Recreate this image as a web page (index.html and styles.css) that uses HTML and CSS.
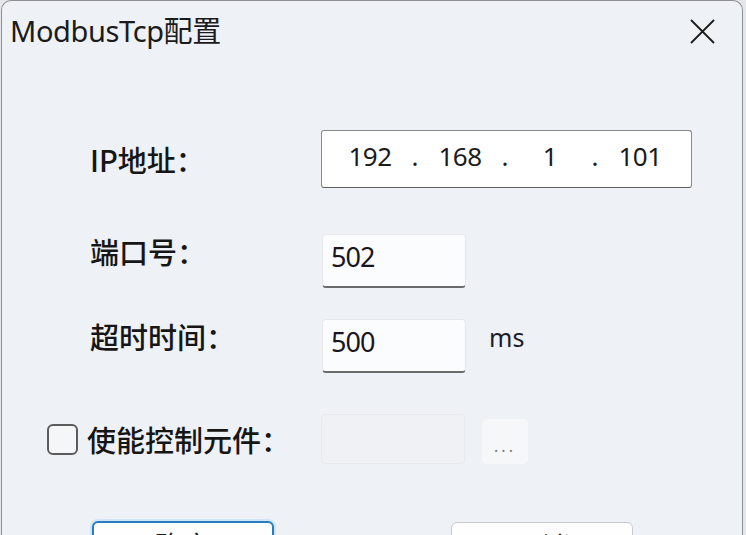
FILE: index.html
```html
<!DOCTYPE html>
<html lang="zh-CN">
<head>
    <meta charset="UTF-8">
    <title>ModbusTcp配置</title>
    <link rel="stylesheet" href="styles.css">
</head>
<body>
    <div class="window">
        <header class="titlebar">
            <h1 class="title">ModbusTcp配置</h1>
            <button class="close" aria-label="关闭">
                <svg width="25" height="25" viewBox="0 0 25 25">
                    <path d="M1 1 L24 24 M24 1 L1 24" stroke="#1c1c1c" stroke-width="1.8" fill="none"/>
                </svg>
            </button>
        </header>

        <div class="form">
            <div class="row row-ip">
                <label class="label">IP地址：</label>
                <div class="ipbox">
                    <span class="octet">192</span><span class="dot">.</span>
                    <span class="octet">168</span><span class="dot">.</span>
                    <span class="octet">1</span><span class="dot">.</span>
                    <span class="octet">101</span>
                </div>
            </div>

            <div class="row row-port">
                <label class="label raised">端口号：</label>
                <div class="field">502</div>
            </div>

            <div class="row row-timeout">
                <label class="label raised">超时时间：</label>
                <div class="field">500</div>
                <span class="unit">ms</span>
            </div>

            <div class="row row-enable">
                <span class="check"></span>
                <label class="label">使能控制元件：</label>
                <div class="field disabled"></div>
                <button class="browse">...</button>
            </div>
        </div>

        <div class="actions">
            <button class="btn primary">确定</button>
            <button class="btn">取消</button>
        </div>
    </div>
</body>
</html>
```

FILE: styles.css
```css
html, body {
    margin: 0;
    height: 100%;
    overflow: hidden;
}

body {
    background-color: #e6e7ea;
    font-family: "Noto Sans", "Noto Sans CJK SC", sans-serif;
    color: #1b1b1b;
}

.window {
    margin-left: 1px;
    width: 740px;
    height: 600px;
    background-color: #eef1f5;
    border: 1px solid #8e8e93;
    border-bottom: none;
    border-radius: 10px 10px 0 0;
}

/* title bar */
.titlebar {
    height: 64px;
    display: flex;
    align-items: flex-start;
    justify-content: space-between;
}

.title {
    margin: 0;
    padding: 12px 0 0 8px;
    font-size: 29px;
    font-weight: 400;
    line-height: 36px;
    letter-spacing: -0.4px;
}

.close {
    margin: 18px 27px 0 0;
    padding: 0;
    border: none;
    background: none;
    width: 25px;
    height: 25px;
}

/* form rows */
.row {
    display: flex;
    align-items: center;
    padding-left: 88px;
}

.label {
    width: 231px;
    flex-shrink: 0;
    font-family: "Noto Sans CJK SC", sans-serif;
    font-size: 29px;
    font-weight: 500;
    line-height: 36px;
    color: #161616;
}

.raised {
    margin-bottom: 20px;
}

.row-ip {
    margin-top: 65px;
    height: 58px;
}

.row-port {
    margin-top: 46px;
    height: 54px;
}

.row-timeout {
    margin-top: 31px;
    height: 54px;
}

.row-enable {
    margin-top: 41px;
    height: 50px;
    padding-left: 45px;
}

.row-enable .label {
    width: 234px;
}

/* ip address control */
.ipbox {
    box-sizing: border-box;
    width: 371px;
    height: 58px;
    display: flex;
    align-items: center;
    padding: 0 0 7px 17px;
    background-color: #ffffff;
    border: 1px solid #8a8a8a;
    border-bottom-color: #5e5e5e;
    border-radius: 3px;
    font-size: 26px;
}

.octet {
    width: 62px;
    text-align: center;
    letter-spacing: -0.5px;
}

.dot {
    width: 28px;
    text-align: center;
}

/* text fields */
.field {
    box-sizing: border-box;
    width: 144px;
    height: 54px;
    margin-left: 1px;
    padding: 0 0 9px 8px;
    display: flex;
    align-items: center;
    background-color: #fbfcfd;
    border: 1px solid #e6e8eb;
    border-bottom: 2px solid #6b6b6b;
    border-radius: 4px;
    font-size: 27px;
    letter-spacing: -1px;
    color: #1a1520;
}

.field.disabled {
    height: 50px;
    margin-left: 0;
    background-color: #eff1f4;
    border: 1px solid #e8eaed;
}

.unit {
    margin: 0 0 18px 23px;
    font-size: 25px;
    color: #1c1c2a;
}

.check {
    box-sizing: border-box;
    width: 31px;
    height: 31px;
    margin-right: 9px;
    border: 2px solid #5b5b5b;
    border-radius: 6px;
    background-color: #f4f6f8;
}

.browse {
    box-sizing: border-box;
    width: 46px;
    height: 45px;
    margin: 5px 0 0 17px;
    padding: 8px 0 0;
    border: none;
    border-radius: 5px;
    background-color: #f6f7f9;
    color: #7d7d82;
    font-family: "Noto Sans", sans-serif;
    font-size: 16px;
    letter-spacing: 3px;
}

/* dialog buttons */
.actions {
    display: flex;
    gap: 177px;
    margin-top: 58px;
    padding-left: 90px;
}

.btn {
    box-sizing: border-box;
    width: 182px;
    height: 48px;
    background-color: #fefefe;
    border: 1px solid #c8c9cc;
    border-radius: 6px;
    font-family: "Noto Sans CJK SC", sans-serif;
    font-size: 28px;
    color: #1b1b1b;
}

.btn.primary {
    border: 2px solid #2a7cc0;
    box-shadow: 0 0 0 2px #cfe6f7;
    margin-top: -1px;
}
```
